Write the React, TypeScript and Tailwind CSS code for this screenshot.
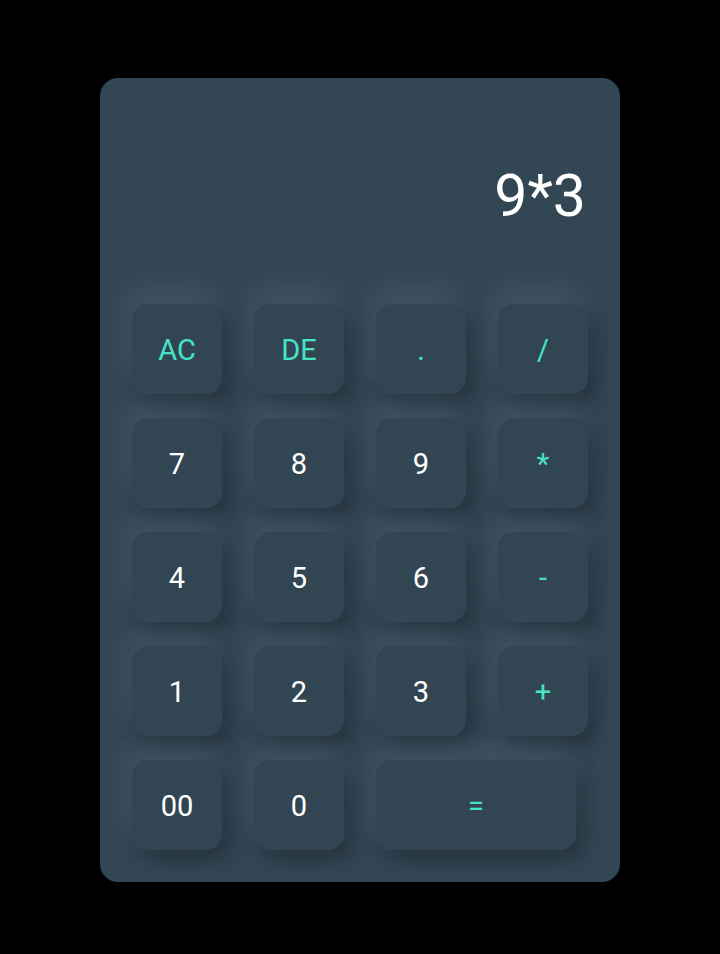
import React, { useState } from 'react';

const keys: { label: string; accent?: boolean; wide?: boolean }[] = [
  { label: 'AC', accent: true },
  { label: 'DE', accent: true },
  { label: '.', accent: true },
  { label: '/', accent: true },
  { label: '7' },
  { label: '8' },
  { label: '9' },
  { label: '*', accent: true },
  { label: '4' },
  { label: '5' },
  { label: '6' },
  { label: '-', accent: true },
  { label: '1' },
  { label: '2' },
  { label: '3' },
  { label: '+', accent: true },
  { label: '00' },
  { label: '0' },
  { label: '=', accent: true, wide: true },
];

const App: React.FC = () => {
  const [value, setValue] = useState('9*3');

  const press = (k: string) => {
    if (k === 'AC') return setValue('');
    if (k === 'DE') return setValue(v => v.slice(0, -1));
    if (k === '=') {
      try {
        // eslint-disable-next-line no-new-func
        setValue(String(Function(`return (${value})`)()));
      } catch {
        setValue('Error');
      }
      return;
    }
    setValue(v => v + k);
  };

  return (
    <div className="min-h-[954px] w-full bg-black flex justify-center pt-[78px] font-['Roboto',sans-serif]">
      <div className="w-[520px] h-[804px] rounded-[18px] bg-[#334654] px-8 pb-8 flex flex-col">
        {/* Display */}
        <div className="h-[226px] flex items-start justify-end pt-[88px] pr-[2px]">
          <span className="text-[59px] leading-none text-white">{value}</span>
        </div>

        {/* Keypad */}
        <div className="grid grid-cols-[repeat(4,90px)] gap-x-8 gap-y-6">
          {keys.map(k => (
            <button
              key={k.label}
              onClick={() => press(k.label)}
              className={`h-[90px] rounded-[16px] bg-[#324553] flex items-center justify-center pt-[3px] text-[29px] shadow-[-6px_-16px_26px_rgba(105,130,148,0.22),8px_10px_20px_rgba(0,0,0,0.26)] ${
                k.accent ? 'text-[#45e4c6]' : 'text-white'
              } ${k.wide ? 'col-span-2 w-[200px]' : 'w-[90px]'}`}
            >
              {k.label}
            </button>
          ))}
        </div>
      </div>
    </div>
  );
};

export default App;
